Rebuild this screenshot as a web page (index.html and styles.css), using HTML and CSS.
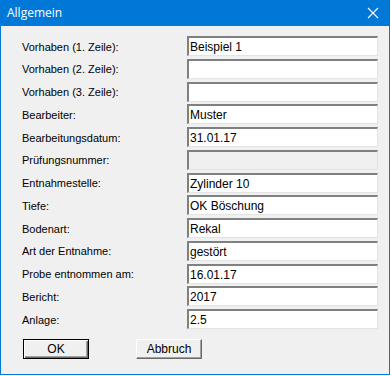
FILE: index.html
```html
<!DOCTYPE html>
<html lang="de">
<head>
    <meta charset="UTF-8">
    <title>Allgemein</title>
    <link rel="stylesheet" href="styles.css">
</head>
<body>
    <div class="window">
        <div class="titlebar">
            <span class="title">Allgemein</span>
            <svg class="close" width="12" height="12" viewBox="0 0 12 12">
                <path d="M1 1 L11 11 M11 1 L1 11" stroke="#fff" stroke-width="1.1" fill="none"/>
            </svg>
        </div>
        <div class="content">
            <div class="form">
                <label>Vorhaben (1. Zeile):</label><div class="field">Beispiel 1</div>
                <label>Vorhaben (2. Zeile):</label><div class="field"></div>
                <label>Vorhaben (3. Zeile):</label><div class="field"></div>
                <label>Bearbeiter:</label><div class="field">Muster</div>
                <label>Bearbeitungsdatum:</label><div class="field">31.01.17</div>
                <label>Prüfungsnummer:</label><div class="field disabled"></div>
                <label>Entnahmestelle:</label><div class="field">Zylinder 10</div>
                <label>Tiefe:</label><div class="field">OK Böschung</div>
                <label>Bodenart:</label><div class="field">Rekal</div>
                <label>Art der Entnahme:</label><div class="field">gestört</div>
                <label>Probe entnommen am:</label><div class="field">16.01.17</div>
                <label>Bericht:</label><div class="field">2017</div>
                <label>Anlage:</label><div class="field">2.5</div>
            </div>
            <div class="buttons">
                <button class="btn default">OK</button>
                <button class="btn">Abbruch</button>
            </div>
        </div>
    </div>
</body>
</html>
```

FILE: styles.css
```css
body {
    margin: 0;
    background: #ffffff;
    font-family: "Liberation Sans", Arial, sans-serif;
    font-size: 11px;
    color: #000;
}
.window {
    width: 388px;
    height: 374px;
    background: #f0f0f0;
    border: 1px solid #0078d7;
    border-top: none;
}
.titlebar {
    height: 26px;
    margin: 0 -1px;
    background: #0078d7;
    display: flex;
    align-items: center;
    justify-content: space-between;
    padding: 0 11px 0 7px;
}
.title {
    color: #fff;
    font-family: "Open Sans", "Noto Sans", sans-serif;
    font-size: 12px;
    padding-bottom: 2px;
}
.close {
    display: block;
}
.content {
    padding: 10px 10px 0 21px;
}
.form {
    display: grid;
    grid-template-columns: 165px 191px;
    grid-auto-rows: 20px;
    row-gap: 2.75px;
    align-items: center;
}
.form label {
    padding-top: 1px;
}
.field {
    box-sizing: border-box;
    height: 20px;
    background: #fff;
    border-style: solid;
    border-width: 2px 1px 1px 2px;
    border-color: #808080 #e3e3e3 #e3e3e3 #808080;
    padding: 2px 2px 0 1px;
    font-size: 12px;
    line-height: 14px;
}
.field.disabled {
    background: #f0f0f0;
}
.buttons {
    display: flex;
    gap: 47px;
    margin-top: 10px;
    padding-left: 1px;
}
.btn {
    box-sizing: border-box;
    width: 66px;
    height: 20px;
    padding: 0;
    background: #f0f0f0;
    font-family: "Liberation Sans", Arial, sans-serif;
    font-size: 12px;
    border: 1px solid;
    border-color: #ffffff #696969 #696969 #ffffff;
    box-shadow: inset -1px -1px 0 #a0a0a0;
}
.btn.default {
    border: 1px solid #000;
    box-shadow: inset 1px 1px 0 #fff, inset -1px -1px 0 #696969, inset -2px -2px 0 #a0a0a0;
}
```
